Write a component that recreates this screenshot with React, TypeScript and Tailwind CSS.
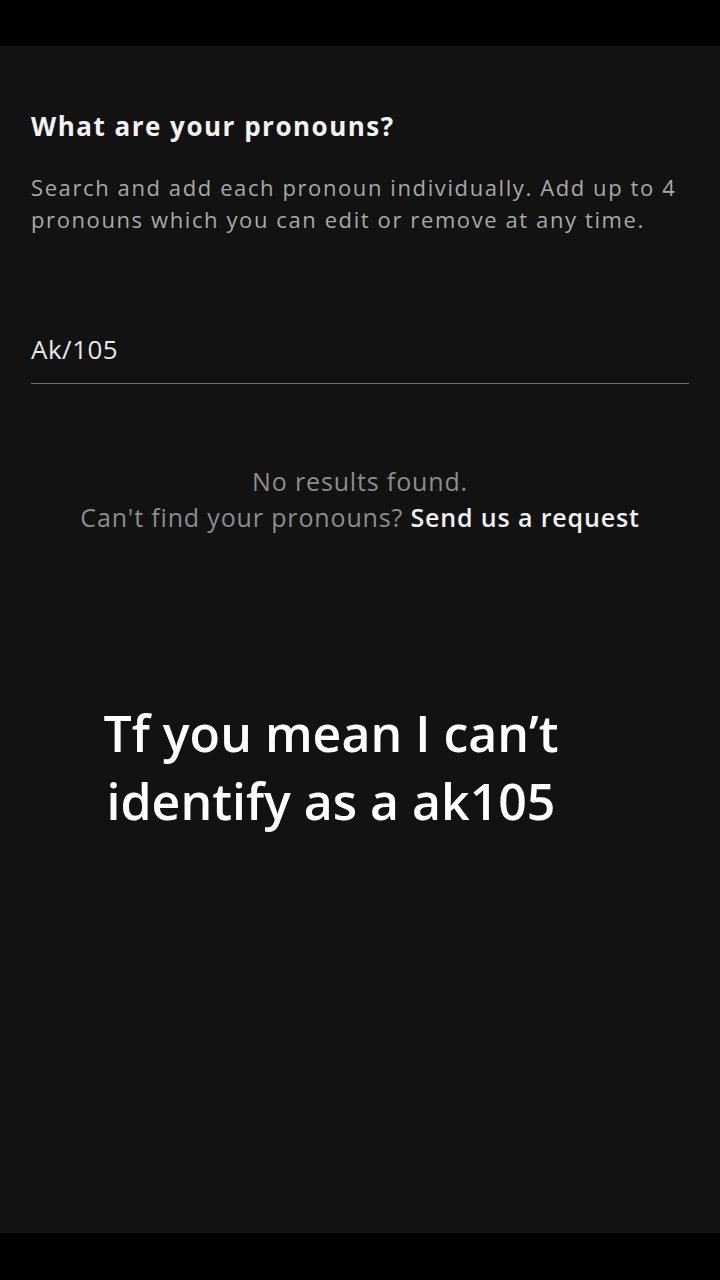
import React from "react";

export default function App() {
  return (
    <div className="w-[720px] h-[1280px] bg-black flex flex-col" style={{ fontFamily: "'Open Sans', Lato, sans-serif" }}>
      {/* status area */}
      <div className="h-[46px] shrink-0 bg-black" />

      {/* sheet */}
      <div className="h-[1187px] shrink-0 bg-[#121212] flex flex-col">
        <div className="px-[31px] pt-[62px]">
          <h1 className="text-[26px] leading-[36px] font-bold tracking-[1.5px] text-[#f2f2f2]">What are your pronouns?</h1>
          <p className="mt-[27px] text-[22px] leading-[32px] tracking-[1.6px] text-[#a8a8a8]">
            Search and add each pronoun individually. Add up to 4 pronouns which you can edit or remove at any time.
          </p>

          <div className="mt-[97px]">
            <div className="text-[26px] leading-[34px] tracking-[0.5px] text-[#e6e6e6]">Ak/105</div>
            <div className="mt-[17px] h-[1px] w-[658px] bg-[#6b6b6b]" />
          </div>
        </div>

        <div className="mt-[79px] flex flex-col items-center text-[25px] leading-[36px] tracking-[0.85px] text-[#8c8c8c]">
          <span>No results found.</span>
          <span>
            Can't find your pronouns? <span className="font-semibold text-[#f0f0f0]">Send us a request</span>
          </span>
        </div>

        {/* caption overlay text */}
        <div className="mt-[164px] ml-[96px] w-[470px] text-center text-[50px] leading-[68px] font-semibold text-white">
          Tf you mean I can’t
          <br />
          identify as a ak105
        </div>
      </div>

      <div className="flex-1 bg-black" />
    </div>
  );
}
